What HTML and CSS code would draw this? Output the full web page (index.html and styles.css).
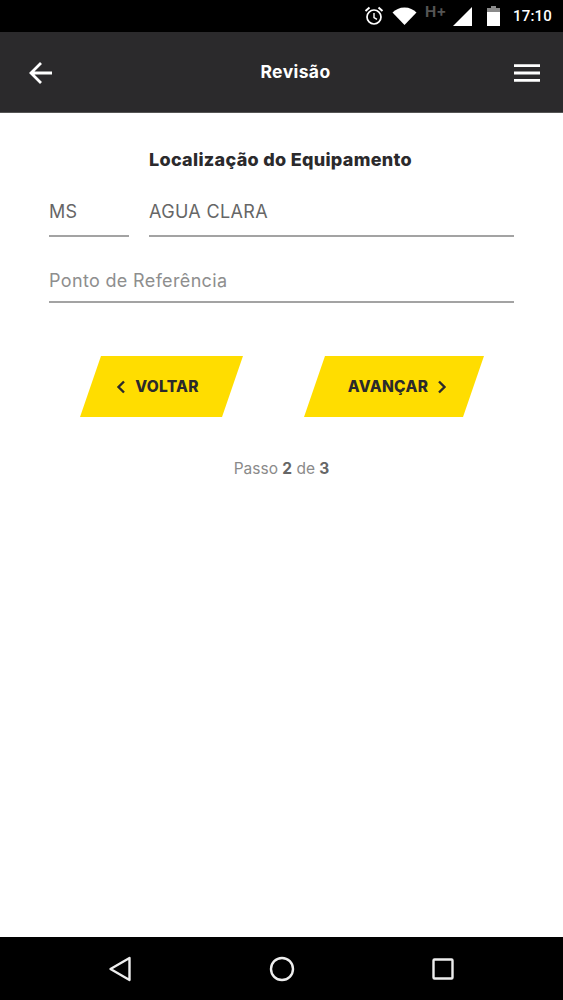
FILE: index.html
```html
<!DOCTYPE html>
<html lang="pt-BR">
<head>
<meta charset="utf-8">
<title>Revisão</title>
<link rel="stylesheet" href="styles.css">
</head>
<body>
<div class="screen">
  <div class="statusbar">
    <svg class="st-alarm" viewBox="0 0 20 20" width="20" height="20"><circle cx="10" cy="11" r="7" fill="none" stroke="#fff" stroke-width="1.7"/><path d="M10 7v4.500l3 1.800" fill="none" stroke="#fff" stroke-width="1.400"/><path d="M1.500 5 5.500 1.600M18.500 5 14.500 1.600" stroke="#fff" stroke-width="2"/></svg>
    <svg class="st-wifi" viewBox="0 0 24 18" width="25" height="18"><path d="M0 5.500C3 2.500 7 .5 12 .5s9 2 12 5L12 18z" fill="#fff"/></svg>
    <span class="st-net">H+</span>
    <svg class="st-signal" viewBox="0 0 19 19" width="19" height="19"><path d="M0 19 19 0v19z" fill="#fff"/></svg>
    <svg class="st-batt" viewBox="0 0 13 20" width="13" height="20"><path d="M4 0h5v2h4v18H0V2h4z" fill="#fff"/><path d="M4 0h5v2h4v4H0V2h4z" fill="#8a8a8a"/></svg>
    <span class="st-time">17:10</span>
  </div>
  <header class="appbar">
    <svg class="ab-icon" viewBox="0 0 24 24" width="24" height="24"><path d="M23 12H2M12 2 2 12l10 10" fill="none" stroke="#fff" stroke-width="2.800"/></svg>
    <h1 class="ab-title">Revisão</h1>
    <svg class="ab-icon" viewBox="0 0 26 18" width="26" height="18"><path d="M0 1.700h26M0 9h26M0 16.300h26" fill="none" stroke="#fff" stroke-width="2.800"/></svg>
  </header>
  <main class="content">
    <h2 class="heading">Localização do Equipamento</h2>
    <div class="row">
      <div class="field field-uf">MS</div>
      <div class="field field-city">AGUA CLARA</div>
    </div>
    <div class="field field-ref">Ponto de Referência</div>
    <div class="actions">
      <button class="btn btn-back">
        <svg viewBox="0 0 10 14" width="10" height="14"><path d="M8 1.500 2.500 7 8 12.500" fill="none" stroke="#2b2a2c" stroke-width="2.400"/></svg>
        VOLTAR
      </button>
      <button class="btn btn-next">
        AVANÇAR
        <svg viewBox="0 0 10 14" width="10" height="14"><path d="M2 1.500 7.500 7 2 12.500" fill="none" stroke="#2b2a2c" stroke-width="2.400"/></svg>
      </button>
    </div>
    <p class="step">Passo <b>2</b> de <b>3</b></p>
  </main>
  <nav class="navbar">
    <svg viewBox="0 0 24 26" width="24" height="26"><path d="M21.500 2 2.500 13l19 11z" fill="none" stroke="#eee" stroke-width="2.400" stroke-linejoin="round"/></svg>
    <svg viewBox="0 0 26 26" width="26" height="26"><circle cx="13" cy="13" r="11" fill="none" stroke="#eee" stroke-width="2.400"/></svg>
    <svg viewBox="0 0 24 24" width="24" height="24"><rect x="2.500" y="2.500" width="19" height="19" rx="1" fill="none" stroke="#eee" stroke-width="2.400"/></svg>
  </nav>
</div>
</body>
</html>
```
FILE: styles.css
```css
* { box-sizing: border-box; }
html, body { margin: 0; padding: 0; }
body { font-family: Inter, "Liberation Sans", sans-serif; background: #fff; }
.screen { width: 563px; height: 1000px; display: flex; flex-direction: column; overflow: hidden; }

.statusbar { height: 32px; background: #000; display: flex; align-items: center; justify-content: flex-end; padding-right: 10px; color: #fff; flex: none; }
.st-alarm { margin-right: 8px; }
.st-wifi { margin-right: 8px; }
.st-net { font-size: 15px; font-weight: 700; color: #555; margin-right: 6px; position: relative; top: -5px; width: 22px; }
.st-signal { margin-right: 15px; }
.st-batt { margin-right: 13px; }
.st-time { font-size: 15px; font-weight: 500; letter-spacing: .2px; font-family: Roboto, sans-serif; width: 40px; }

.appbar { height: 81px; flex: none; background: #2b2a2c; display: flex; align-items: center; justify-content: space-between; padding: 2px 23px 0 29px; border-bottom: 1px solid #555; }
.ab-title { margin: 0 0 4px 24px; color: #fff; font-size: 17.500px; font-weight: 700; letter-spacing: .4px; }

.content { flex: 1; padding: 0 49px; }
.heading { margin: 36px 0 0 100px; font-size: 18px; font-weight: 800; color: #2b2a2c; line-height: 22px; letter-spacing: .3px; white-space: nowrap; }
.row { display: flex; gap: 20px; margin-top: 18px; }
.field { height: 48px; font-size: 18px; letter-spacing: .35px; color: #666; line-height: 46px; border-bottom: 2px solid #a3a3a3; }
.field-uf { width: 80px; }
.field-city { width: 365px; }
.field-ref { width: 465px; margin-top: 18px; line-height: 52px; color: #8e8e8e; }

.actions { display: flex; gap: 61px; margin: 53px 0 0 31px; }
.btn { height: 61px; border: 0; background: #ffdd00; font: 800 15.500px Inter, sans-serif; letter-spacing: .3px; color: #2b2a2c; display: flex; align-items: center; justify-content: center; gap: 9px; padding: 0; }
.btn-back { width: 163px; clip-path: polygon(21px 0, 100% 0, 142px 100%, 0 100%); padding-right: 8px; }
.btn-next { width: 180px; clip-path: polygon(21px 0, 100% 0, 159px 100%, 0 100%); padding-left: 7px; }

.step { margin: 42px 0 0; text-align: center; font-size: 15.500px; line-height: 20px; color: #8a8a8a; }
.step b { color: #666; }

.navbar { height: 63px; flex: none; background: #000; display: flex; align-items: center; justify-content: center; gap: 136.500px; }
```
